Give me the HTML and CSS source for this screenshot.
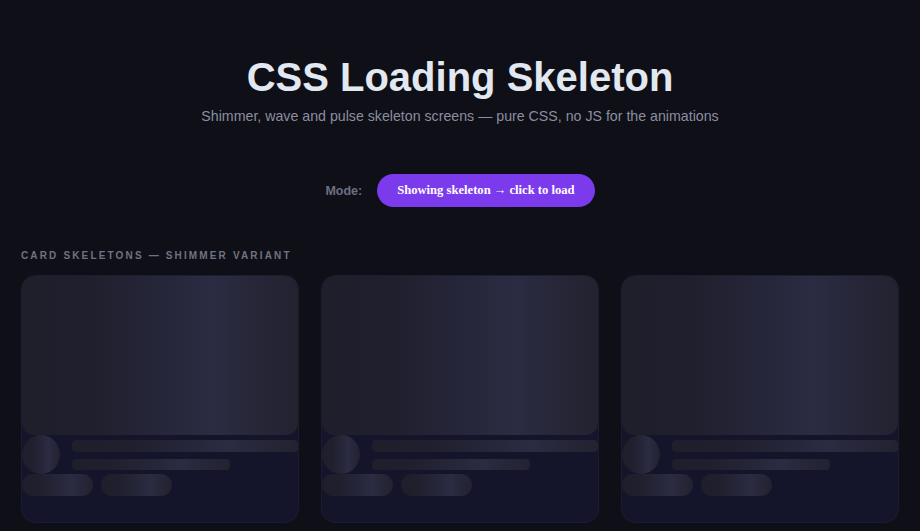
FILE: index.html
```html
<!DOCTYPE html>
<html>

<head>
    <meta charset="utf-8" />
    <title>CSS Loading Skeleton</title>
    <link rel="stylesheet" href="styles.css">
</head>

<body>
    <header class="hero">
        <h1>CSS Loading Skeleton</h1>
        <p>Shimmer, wave and pulse skeleton screens — pure CSS, no JS for the animations</p>
    </header>

    <div class="controls">
        <span class="controls_label">Mode:</span>
        <button class="toggle">Showing skeleton → click to load</button>
    </div>

    <section class="section">
        <h2 class="section_title">Card skeletons — shimmer variant</h2>
        <ul class="cards">
            <li class="card">
                <div class="sk sk_image"></div>
                <div class="card_head">
                    <div class="sk sk_avatar"></div>
                    <div class="card_lines">
                        <div class="sk sk_line"></div>
                        <div class="sk sk_line short"></div>
                    </div>
                </div>
                <div class="card_tags">
                    <div class="sk sk_pill"></div>
                    <div class="sk sk_pill"></div>
                </div>
            </li>
            <li class="card">
                <div class="sk sk_image"></div>
                <div class="card_head">
                    <div class="sk sk_avatar"></div>
                    <div class="card_lines">
                        <div class="sk sk_line"></div>
                        <div class="sk sk_line short"></div>
                    </div>
                </div>
                <div class="card_tags">
                    <div class="sk sk_pill"></div>
                    <div class="sk sk_pill"></div>
                </div>
            </li>
            <li class="card">
                <div class="sk sk_image"></div>
                <div class="card_head">
                    <div class="sk sk_avatar"></div>
                    <div class="card_lines">
                        <div class="sk sk_line"></div>
                        <div class="sk sk_line short"></div>
                    </div>
                </div>
                <div class="card_tags">
                    <div class="sk sk_pill"></div>
                    <div class="sk sk_pill"></div>
                </div>
            </li>
        </ul>
    </section>
</body>

</html>
```

FILE: styles.css
```css
/*
    A. Mini Reset
*/

*,
*:after,
*:before {
    box-sizing: border-box;
}

* {
    margin: 0;
    padding: 0;
}

ul {
    list-style: none;
}

html,
body {
    height: 100%;
}

body {
    background: #0f0f18;
    color: #e2e8f0;
    font-family: 'Liberation Sans', 'Arial', sans-serif;
    padding: 0 21px;
    overflow: hidden;
}

/*
    1. header
*/

.hero {
    text-align: center;
    padding-top: 53px;
}

.hero h1 {
    font-size: 40px;
    font-weight: 700;
    line-height: 1.2;
    color: #e2e8f0;
}

.hero p {
    margin-top: 7px;
    font-size: 14.2px;
    color: #8a8e9f;
}

/*
    2. mode toggle
*/

.controls {
    display: flex;
    justify-content: center;
    align-items: center;
    gap: 15px;
    margin-top: 50px;
}

.controls_label {
    font-size: 12.5px;
    font-weight: 700;
    color: #6b6f80;
}

.toggle {
    height: 33px;
    padding: 0 20px;
    border: 0;
    border-radius: 999px;
    background: #7c3aed;
    color: #fff;
    font-family: 'Liberation Serif', 'Times New Roman', serif;
    font-size: 12.6px;
    font-weight: 700;
}

/*
    3. section + cards
*/

.section {
    margin-top: 43px;
}

.section_title {
    font-size: 10px;
    font-weight: 700;
    letter-spacing: 2.15px;
    text-transform: uppercase;
    color: #70737f;
    margin-bottom: 14px;
}

.cards {
    display: grid;
    grid-template-columns: repeat(3, 1fr);
    gap: 22px;
}

.card {
    height: 248px;
    border: 1px solid #1c1c30;
    border-radius: 14px;
    background: #14142b;
    overflow: hidden;
}

/* skeleton blocks */

.sk {
    background-color: #1f1e2b;
    background-image: linear-gradient(90deg, #1f1e2b 0%, #201f2d 25%, #26263a 50%, #2b2b42 70%, #23222f 100%);
}

.sk_image {
    height: 159px;
    border-radius: 12px;
}

.card_head {
    display: flex;
    gap: 12px;
    align-items: flex-start;
}

.sk_avatar {
    flex: none;
    width: 38px;
    height: 39px;
    border-radius: 50%;
}

.card_lines {
    flex: 1;
    padding-top: 5px;
}

.sk_line {
    height: 12px;
    border-radius: 4px;
}

.sk_line.short {
    width: 70%;
    height: 11px;
    margin-top: 7px;
}

.card_tags {
    display: flex;
    gap: 8px;
}

.sk_pill {
    width: 71px;
    height: 22px;
    border-radius: 11px;
}
```
